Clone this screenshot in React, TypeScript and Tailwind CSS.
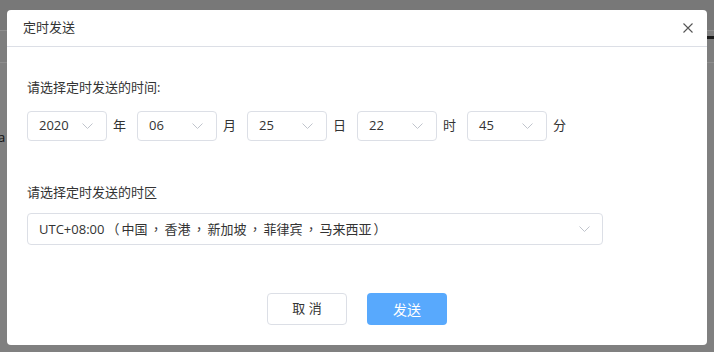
import React from "react";

const FONT = { fontFamily: '"Open Sans", "Noto Sans CJK SC", sans-serif' };
const PUNCT = { fontFamily: '"Noto Sans CJK TC", sans-serif' };

function Chevron() {
  return (
    <svg width="11" height="6" viewBox="0 0 11 6" fill="none">
      <path d="M0.5 0.5 L5.5 5.5 L10.5 0.5" stroke="#c0c4cc" strokeWidth="1" />
    </svg>
  );
}

function Select({ value, unit }: { value: string; unit: string }) {
  return (
    <div className="flex items-center">
      <div className="flex h-[30px] w-[80px] items-center justify-between rounded-[4px] border border-[#dcdfe6] bg-white pl-[11px] pr-[13px] text-[13px] text-[#333]">
        <span>{value}</span>
        <Chevron />
      </div>
      <span className="ml-[6px] mr-[11px] text-[13px] text-[#333]">{unit}</span>
    </div>
  );
}

function P({ c }: { c: string }) {
  return (
    <span className="px-[2px]" style={PUNCT}>
      {c}
    </span>
  );
}

export default function App() {
  return (
    <div className="relative h-[352px] w-[714px] overflow-hidden bg-[#808080]" style={FONT}>
      <div className="h-[30px] bg-[#787878]" />
      <div className="h-px bg-[#8e8e8e]" />
      <div className="flex h-[31px] justify-end bg-[#7e7e7e]">
        <div className="mt-[5px] h-[3px] w-[8px] bg-[#1a1a1a]" />
      </div>
      <div className="h-px bg-[#8e8e8e]" />
      <div className="mt-[66px] -ml-[2px] text-[13px] leading-[16px] text-[#111]">a</div>

      <div className="absolute left-[7px] top-[10px] flex h-[335px] w-[700px] flex-col rounded-[4px] bg-white">
        <div className="flex h-[37px] items-center justify-between border-b border-[#dcdfe6] pl-[16px] pr-[14px]">
          <span className="text-[13px] text-[#333]">定时发送</span>
          <svg width="10" height="10" viewBox="0 0 10 10">
            <path d="M0.5 0.5 L9.5 9.5 M9.5 0.5 L0.5 9.5" stroke="#555" strokeWidth="1.1" />
          </svg>
        </div>
        <div className="flex flex-col px-[20px] pt-[30px]">
          <div className="h-[20px] text-[13px] leading-[20px] text-[#333]">请选择定时发送的时间:</div>
          <div className="mt-[14px] flex">
            <Select value="2020" unit="年" />
            <Select value="06" unit="月" />
            <Select value="25" unit="日" />
            <Select value="22" unit="时" />
            <Select value="45" unit="分" />
          </div>
          <div className="mt-[41px] h-[20px] text-[13px] leading-[20px] text-[#333]">请选择定时发送的时区</div>
          <div className="mt-[11px] flex h-[32px] w-[576px] items-center justify-between rounded-[4px] border border-[#dcdfe6] pl-[11px] pr-[12px] text-[13px] text-[#333]">
            <span>
              UTC+08:00<P c="（" />中国<P c="，" />香港<P c="，" />新加坡<P c="，" />菲律宾<P c="，" />马来西亚<P c="）" />
            </span>
            <Chevron />
          </div>
          <div className="mt-[48px] flex justify-center gap-[20px]">
            <div className="flex h-[32px] w-[80px] items-center justify-center rounded-[4px] border border-[#dcdfe6] bg-white text-[13px] text-[#333]">
              取 消
            </div>
            <div className="flex h-[32px] w-[80px] items-center justify-center rounded-[4px] bg-[#58a9fd] text-[14px] text-white">
              发送
            </div>
          </div>
        </div>
      </div>
    </div>
  );
}
